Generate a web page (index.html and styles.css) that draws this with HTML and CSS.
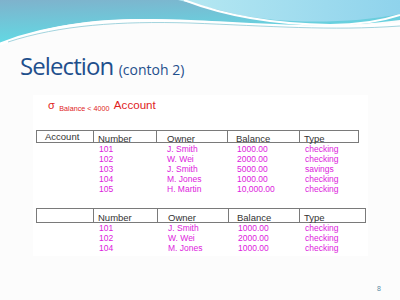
FILE: index.html
```html
<!DOCTYPE html>
<html>
<head>
<meta charset="utf-8">
<link rel="stylesheet" href="styles.css">
</head>
<body>
<div class="slide">
  <svg class="wave" width="400" height="46" viewBox="0 0 400 46">
    <defs>
      <linearGradient id="g1" x1="0" y1="0" x2="0.3" y2="1">
        <stop offset="0" stop-color="#7fb2cc"/>
        <stop offset="1" stop-color="#5fdde6"/>
      </linearGradient>
      <linearGradient id="g2" x1="0" y1="0" x2="1" y2="0">
        <stop offset="0" stop-color="#b6e8f2"/>
        <stop offset="1" stop-color="#8fd3ec"/>
      </linearGradient>
    </defs>
    <path d="M0,0 H400 V20 C340,28 260,26 190,21 C120,16 60,20 0,44 Z" fill="url(#g1)"/>
    <path d="M178,0 H400 V14 C350,24 280,24 235,14 C210,8 195,4 178,0 Z" fill="url(#g2)"/>
    <path d="M184,0 C215,12 260,24 330,25 C360,25 385,20 400,15" fill="none" stroke="#ffffff" stroke-width="2"/>
    <path d="M0,44 C50,24 110,19 180,21 C260,24 330,31 400,24" fill="none" stroke="#ffffff" stroke-width="3"/>
    <path d="M8,42 C60,25 120,21 190,23 C270,26 330,31 400,26" fill="none" stroke="#8cc9d6" stroke-width="0.8"/>
  </svg>
  <h1 class="title">Selection <span class="sub">(contoh 2)</span></h1>
  <div class="panel">
    <div class="expr"><span class="sigma">σ</span> <span class="cond">Balance &lt; 4000</span> <span class="rel">Account</span></div>
    <div class="tbl t1">
      <div class="row head"><span>Account</span><span>Number</span><span>Owner</span><span>Balance</span><span>Type</span></div>
      <div class="row data"><span></span><span>101</span><span>J. Smith</span><span>1000.00</span><span>checking</span></div>
      <div class="row data"><span></span><span>102</span><span>W. Wei</span><span>2000.00</span><span>checking</span></div>
      <div class="row data"><span></span><span>103</span><span>J. Smith</span><span>5000.00</span><span>savings</span></div>
      <div class="row data"><span></span><span>104</span><span>M. Jones</span><span>1000.00</span><span>checking</span></div>
      <div class="row data"><span></span><span>105</span><span>H. Martin</span><span>10,000.00</span><span>checking</span></div>
    </div>
    <div class="tbl t2">
      <div class="row head"><span></span><span>Number</span><span>Owner</span><span>Balance</span><span>Type</span></div>
      <div class="row data"><span></span><span>101</span><span>J. Smith</span><span>1000.00</span><span>checking</span></div>
      <div class="row data"><span></span><span>102</span><span>W. Wei</span><span>2000.00</span><span>checking</span></div>
      <div class="row data"><span></span><span>104</span><span>M. Jones</span><span>1000.00</span><span>checking</span></div>
    </div>
  </div>
  <div class="footer">8</div>
</div>
</body>
</html>
```
FILE: styles.css
```css
html, body {
  margin: 0;
  padding: 0;
}
.slide {
  width: 400px;
  height: 300px;
  overflow: hidden;
  background: #fcfcfc;
  font-family: "Liberation Sans", Arial, sans-serif;
}
.wave {
  display: block;
}
.title {
  margin: 6px 0 0 20px;
  font-family: "Open Sans", sans-serif;
  font-weight: 400;
  font-size: 24px;
  line-height: 28px;
  height: 28px;
  letter-spacing: -0.9px;
  color: #1f4f8c;
}
.title .sub {
  font-size: 14px;
  line-height: 14px;
  letter-spacing: 0;
}
.panel {
  margin: 15px 0 0 33px;
  width: 335px;
  background: #ffffff;
  padding: 2px 0 3px 3px;
  box-sizing: border-box;
}
.expr {
  margin-left: 12px;
  height: 14px;
  line-height: 14px;
  color: #e0221e;
  white-space: nowrap;
}
.sigma {
  font-size: 11px;
}
.cond {
  font-size: 7.2px;
  vertical-align: -2px;
}
.rel {
  font-size: 11.6px;
}
.t1 {
  margin-top: 19px;
  --cols: 57px 63px 71px 72px 60px;
}
.t2 {
  margin-top: 14px;
  --cols: 57px 64px 71px 71px 67px;
}
.row {
  display: grid;
  grid-template-columns: var(--cols);
  white-space: nowrap;
}
.row > span {
  box-sizing: border-box;
}
.head > span {
  border-top: 1px solid #7a7a7a;
  border-bottom: 1px solid #7a7a7a;
  border-left: 1px solid #7a7a7a;
  font-size: 9.5px;
  color: #333333;
  line-height: 11px;
  height: 13px;
  padding-top: 2px;
}
.t2 .head > span {
  height: 15px;
  padding-top: 3px;
}
.head > span:last-child {
  border-right: 1px solid #7a7a7a;
}
.head > span:nth-child(1) { padding-left: 8px; padding-top: 0; }
.head > span:nth-child(2) { padding-left: 4px; }
.head > span:nth-child(3) { padding-left: 10px; }
.head > span:nth-child(4) { padding-left: 8px; }
.head > span:nth-child(5) { padding-left: 4px; }
.t1 .head { margin-bottom: 1px; }
.data > span {
  font-size: 8.5px;
  line-height: 10px;
  height: 10px;
  color: #dd22dd;
}
.data > span:nth-child(2) { padding-left: 6px; }
.data > span:nth-child(3) { padding-left: 11px; }
.data > span:nth-child(4) { padding-left: 10px; }
.data > span:nth-child(5) { padding-left: 6px; }
.footer {
  margin-top: 28px;
  padding-right: 19px;
  text-align: right;
  font-size: 7px;
  line-height: 10px;
  color: #5b8ba6;
}
```
